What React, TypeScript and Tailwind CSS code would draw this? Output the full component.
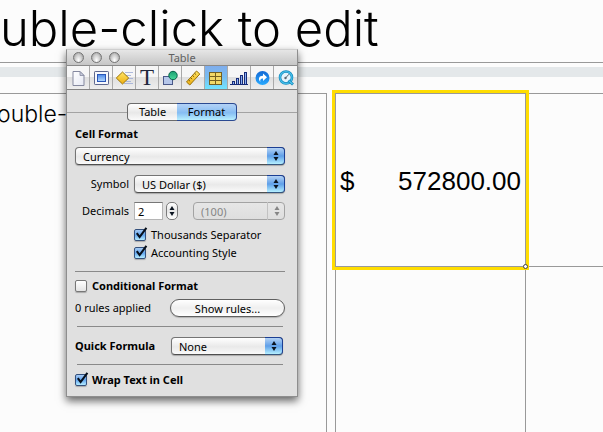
import React, { useState } from "react";

const uiFont = "font-['Noto_Sans','Open_Sans',sans-serif]";

function Arrows({ dim }: { dim?: boolean }) {
  return (
    <svg width="8" height="12" viewBox="0 0 8 12" aria-hidden="true" fill={dim ? "#858585" : "#0b1420"}>
      <path d="M4 1 L6.5 5 H1.5 Z" />
      <path d="M4 11 L6.5 7 H1.5 Z" />
    </svg>
  );
}

function Popup({ id, label, options, disabled, className }: {
  id: string;
  label: string;
  options: string[];
  disabled?: boolean;
  className: string;
}) {
  return (
    <div className={`relative h-[18px] ${className}`}>
      <select
        id={id}
        aria-label={label}
        disabled={disabled}
        className={
          disabled
            ? "block h-full w-full appearance-none rounded-[4px] border border-[#a3a3a3] bg-linear-to-b from-[#e6e6e6] to-[#dedede] px-[7px] text-[11px] leading-[15px] text-[#858585] opacity-100"
            : "block h-full w-full appearance-none rounded-[4px] border border-[#747474] border-b-[#4f4f4f] bg-linear-to-b from-white via-[#e9e9e9] via-55% to-[#fafafa] px-[7px] text-[11px] leading-[15px] text-black shadow-[0_1px_1px_rgba(0,0,0,0.25)]"
        }
      >
        {options.map((o) => (
          <option key={o}>{o}</option>
        ))}
      </select>
      <span
        className={
          disabled
            ? "pointer-events-none absolute inset-y-0 right-0 flex w-[18px] items-center justify-center border-l border-[#c2c2c2]"
            : "pointer-events-none absolute inset-y-0 right-0 flex w-[18px] items-center justify-center rounded-r-[4px] border border-l-0 border-[#1c3f93] border-b-[#35557e] bg-linear-to-b from-[#b4d2f4] via-[#5f9fe8] via-50% to-[#b5f0ff]"
        }
      >
        <Arrows dim={disabled} />
      </span>
    </div>
  );
}

function Check({ label, initial, bold }: { label: string; initial?: boolean; bold?: boolean }) {
  const [on, setOn] = useState(!!initial);
  return (
    <label className={`flex h-[18px] items-center gap-[5px] ${bold ? "font-bold" : ""}`}>
      <span className="relative block h-[12px] w-[12px]">
        <input
          type="checkbox"
          checked={on}
          onChange={() => setOn(!on)}
          className="block h-[12px] w-[12px] appearance-none rounded-[2px] border border-[#777] bg-linear-to-b from-white to-[#e4e4e4] shadow-[0_1px_1px_rgba(0,0,0,0.25)] checked:border-[#34507c] checked:from-[#a6cbf5] checked:via-[#62a5ee] checked:to-[#b4ecff]"
        />
        {on && (
          <svg className="pointer-events-none absolute -top-[2px] left-0" width="14" height="14" viewBox="0 0 14 14" aria-hidden="true">
            <path d="M2.8 6.2 L5.6 10 L12.4 .8" fill="none" stroke="#07101c" strokeWidth="2.1" />
          </svg>
        )}
      </span>
      {label}
    </label>
  );
}

function Icon({ children }: { children: React.ReactNode }) {
  return (
    <svg width="22" height="23" viewBox="0 0 22 23" aria-hidden="true">
      {children}
    </svg>
  );
}

const tools: { name: string; icon: React.ReactNode }[] = [
  {
    name: "Document",
    icon: (
      <Icon>
        <path d="M6 5.5 H13 L17 9.5 V19.5 H6 Z" fill="url(#paper)" stroke="#85899f" />
        <path d="M13 5.5 V9.5 H17 Z" fill="#c9cddd" stroke="#85899f" strokeWidth=".8" />
      </Icon>
    ),
  },
  {
    name: "Slide",
    icon: (
      <Icon>
        <rect x="4.5" y="5.5" width="14" height="13" rx=".7" fill="#f7f8fc" stroke="#5d678e" />
        <rect x="7.5" y="8.5" width="8" height="7" fill="url(#blue)" stroke="#2a56b8" />
      </Icon>
    ),
  },
  {
    name: "Build",
    icon: (
      <Icon>
        <path d="M12 6.5 H20 M13 9.5 H18 M14 12.5 H20 M13 15.5 H18 M11 17.5 H20" stroke="#9cabd5" strokeWidth=".8" />
        <path d="M9.5 6 L15.7 12 L9.5 18 L3.3 12 Z" fill="url(#gold)" stroke="#9b7406" />
      </Icon>
    ),
  },
  {
    name: "Text",
    icon: (
      <span className="flex h-[23px] items-center justify-center font-['Liberation_Serif',serif] text-[23px] leading-[23px] text-[#20263b]">T</span>
    ),
  },
  {
    name: "Graphic",
    icon: (
      <Icon>
        <rect x="4.5" y="10.5" width="9" height="8" fill="#b6c7ea" stroke="#4a5888" />
        <circle cx="14" cy="9.5" r="4.2" fill="url(#green)" stroke="#086249" />
      </Icon>
    ),
  },
  {
    name: "Metrics",
    icon: (
      <Icon>
        <path d="M4.5 16 L14.5 5 L17.8 8 L7.8 19 Z" fill="url(#gold)" stroke="#997106" />
        <path d="M6.5 13.8 l1.6 1.5 M8.5 11.6 l1.6 1.5 M10.5 9.4 l1.6 1.5 M12.5 7.2 l1.6 1.5" stroke="#715407" strokeWidth=".9" />
      </Icon>
    ),
  },
  {
    name: "Table",
    icon: (
      <Icon>
        <rect x="4.5" y="6.5" width="12" height="12" fill="#f2d967" stroke="#756120" />
        <path d="M4.5 10.5 H16.5 M4.5 14.5 H16.5 M10.5 6.5 V18.5" stroke="#756120" />
      </Icon>
    ),
  },
  {
    name: "Chart",
    icon: (
      <Icon>
        <g fill="#88aff4" stroke="#172b77">
          <rect x="4.5" y="15.5" width="2" height="3" />
          <rect x="8.5" y="12.5" width="2" height="6" />
          <rect x="12.5" y="9.5" width="2" height="9" />
          <rect x="16.5" y="6.5" width="2" height="12" />
        </g>
        <path d="M2 18.5 H20" stroke="#172b77" />
      </Icon>
    ),
  },
  {
    name: "Hyperlink",
    icon: (
      <Icon>
        <circle cx="11.5" cy="12" r="7" fill="url(#link)" />
        <path d="M9.3 16 C6.8 12.8 8 9.8 12 9.8 V7.4 L16 11.2 L12 15 V12.5 C9.8 12.4 8.8 13.6 9.3 16 Z" fill="#fff" />
      </Icon>
    ),
  },
  {
    name: "QuickTime",
    icon: (
      <Icon>
        <circle cx="11" cy="11.5" r="6" fill="#e4f4fd" stroke="#1488bd" strokeWidth="2.6" />
        <circle cx="11" cy="11.5" r="6" fill="none" stroke="#46c0ea" strokeWidth="1.2" />
        <circle cx="10.5" cy="12" r="1.2" fill="#5a6670" />
        <path d="M10.5 12 L14 8.2" stroke="#5a6670" />
        <path d="M13.5 14.5 L18 18.5" stroke="#1488bd" strokeWidth="2.8" />
        <path d="M14 14.9 L17.5 18" stroke="#55cdf2" strokeWidth="1.2" />
      </Icon>
    ),
  },
];

function Gradients() {
  return (
    <svg width="0" height="0" className="absolute" aria-hidden="true">
      <defs>
        <linearGradient id="paper" x1="0" y1="0" x2="1" y2="1">
          <stop offset="0" stopColor="#fff" />
          <stop offset="1" stopColor="#e6e9f3" />
        </linearGradient>
        <linearGradient id="blue" x1="0" y1="0" x2="0" y2="1">
          <stop offset="0" stopColor="#4a86e6" />
          <stop offset="1" stopColor="#b7dcff" />
        </linearGradient>
        <linearGradient id="gold" x1="0" y1="0" x2="0" y2="1">
          <stop offset="0" stopColor="#ffe566" />
          <stop offset="1" stopColor="#eeae10" />
        </linearGradient>
        <linearGradient id="green" x1="0" y1="0" x2="0" y2="1">
          <stop offset="0" stopColor="#1a9f70" />
          <stop offset="1" stopColor="#48d99a" />
        </linearGradient>
        <linearGradient id="link" x1="0" y1="0" x2="0" y2="1">
          <stop offset="0" stopColor="#1368d4" />
          <stop offset="1" stopColor="#28aaff" />
        </linearGradient>
      </defs>
    </svg>
  );
}

function Inspector() {
  const [tab, setTab] = useState("Format");
  return (
    <section
      aria-label="Table inspector"
      className={`absolute left-[66px] top-[49px] w-[232px] border border-[#8e8e8e] border-t-[#cfcfcf] bg-[#e0e0e0] pb-[7px] text-[11px] leading-[18px] text-black shadow-[0_4px_8px_rgba(0,0,0,0.6)] ${uiFont}`}
    >
      <header className="grid h-[16px] grid-cols-[1fr_auto_1fr] items-center border-b border-[#8a8a8a] bg-linear-to-b from-[#e6e6e6] to-[#c6c6c6] px-[6px]">
        <div className="flex gap-[7px]">
          {["Close", "Minimize", "Zoom"].map((n) => (
            <button
              key={n}
              aria-label={n}
              className="h-[11px] w-[11px] rounded-full border border-[#757575] bg-radial-[at_50%_80%] from-white via-[#cfcfcf] to-[#8f8f8f]"
            />
          ))}
        </div>
        <h2 className="text-[11px] leading-[15px] text-[#606060]">Table</h2>
      </header>

      <nav className="grid h-[24px] grid-cols-10 border-b border-[#828282]">
        {tools.map((t) => (
          <button
            key={t.name}
            aria-label={t.name}
            className={
              t.name === "Table"
                ? "flex items-center justify-center border-r border-[#a9a9a9] bg-linear-to-b from-[#7fadec] via-[#78bdf0] to-[#6fe4ff]"
                : "flex items-center justify-center border-r border-[#a9a9a9] bg-linear-to-b from-[#f6f6f6] from-50% via-[#dfdfdf] via-50% to-[#eeeeee] last:border-r-0"
            }
          >
            {t.icon}
          </button>
        ))}
      </nav>

      <div className="mt-[13px] flex items-center">
        <span className="h-px flex-1 bg-[#a3a3a3]" />
        <div className="grid h-[18px] w-[110px] grid-cols-[50px_1fr] text-[11px] leading-[16px]">
          {["Table", "Format"].map((t) => (
            <button
              key={t}
              onClick={() => setTab(t)}
              className={`border first:rounded-l-[4px] first:border-r-0 last:rounded-r-[4px] last:border-l-0 ${
                tab === t
                  ? "border-[#2b4a91] bg-linear-to-b from-[#b3d2f6] via-[#86bdf3] via-55% to-[#b8f0ff]"
                  : "border-[#6b6b6b] bg-linear-to-b from-white via-[#e8e8e8] via-55% to-[#fafafa]"
              }`}
            >
              {t}
            </button>
          ))}
        </div>
        <span className="h-px flex-1 bg-[#a3a3a3]" />
      </div>

      <form className="flex flex-col pl-2 pr-3" onSubmit={(e) => e.preventDefault()}>
        <h3 className="mt-[4px] font-bold">Cell Format</h3>
        <Popup id="cell-format" label="Cell Format" options={["Currency", "Number", "Percentage"]} className="mt-1 w-full" />

        <div className="mt-[10px] grid grid-cols-[54px_1fr] items-center gap-x-[5px] gap-y-[9px]">
          <label htmlFor="symbol" className="text-right">Symbol</label>
          <Popup id="symbol" label="Symbol" options={["US Dollar ($)", "Euro (€)"]} className="w-full" />
          <label htmlFor="decimals" className="text-right">Decimals</label>
          <div className="flex items-center">
            <input
              id="decimals"
              defaultValue="2"
              className="h-[18px] w-[29px] border border-[#b5b5b5] border-t-[#777] bg-white px-[3px] text-[11px] leading-[16px]"
            />
            <button
              aria-label="Step decimals"
              className="ml-[3px] flex h-[18px] w-[12px] items-center justify-center rounded-[5px] border border-[#7b7b7b] bg-linear-to-b from-white via-[#e6e6e6] to-white"
            >
              <Arrows />
            </button>
            <Popup id="negative" label="Negative number style" options={["(100)"]} disabled className="ml-auto w-[92px]" />
          </div>
        </div>

        <div className="mt-[6px] flex flex-col pl-[59px]">
          <Check label="Thousands Separator" initial />
          <Check label="Accounting Style" initial />
        </div>

        <hr className="mt-[9px] border-[#8a8a8a]" />

        <div className="mt-[5px]">
          <Check label="Conditional Format" bold />
        </div>
        <div className="mt-[4px] flex items-center justify-between">
          <span>0 rules applied</span>
          <button className="h-[18px] w-[115px] rounded-full border border-[#5f5f5f] bg-linear-to-b from-white via-[#efefef] to-white text-[11px] leading-[15px] shadow-[0_1px_1px_rgba(0,0,0,0.2)]">
            Show rules...
          </button>
        </div>

        <hr className="mx-[2px] mt-[9px] border-[#8a8a8a]" />

        <div className="mt-[10px] flex items-center justify-between pr-[2px]">
          <label htmlFor="quick-formula" className="font-bold">Quick Formula</label>
          <Popup id="quick-formula" label="Quick Formula" options={["None", "Sum", "Average"]} className="w-[112px]" />
        </div>

        <hr className="mx-[2px] mt-[9px] border-[#8a8a8a]" />

        <div className="mt-[6px]">
          <Check label="Wrap Text in Cell" initial bold />
        </div>
      </form>
    </section>
  );
}

export default function App() {
  return (
    <main className="relative flex min-h-screen flex-col overflow-hidden bg-[#fcfcfc] font-['Inter','Liberation_Sans',sans-serif] text-black">
      <Gradients />
      <div className="h-[63px] border-b border-[#999]">
        <h1 className="whitespace-nowrap text-[49px] font-light leading-[58px]">uble-click to edit</h1>
      </div>
      <div className="mt-[4px] h-[10px] bg-[#e4e8ea]" />
      <div className="mt-[16px] flex flex-1">
        <div className="w-[327px] shrink-0 border-r border-t border-[#999] pt-[3px]">
          <p className="-ml-[3px] text-[23px] font-light leading-[34px]">ouble-</p>
        </div>
        <table className="relative ml-[8px] flex-1 border-collapse font-['Liberation_Sans',sans-serif]">
          <colgroup>
            <col className="w-[190px]" />
            <col />
          </colgroup>
          <tbody>
            <tr className="h-[173px]">
              <td className="relative border border-[#999] p-0">
                <div className="flex justify-between px-[4px] pt-[2px] text-[26px] leading-[30px]">
                  <span>$</span>
                  <span>572800.00</span>
                </div>
                <span className="pointer-events-none absolute -inset-[4px] border-[3px] border-[#ffdd00]" />
                <span className="absolute -bottom-[3px] -right-[3px] h-[5px] w-[5px] rounded-full border border-[#444] bg-white" />
              </td>
              <td className="border-y border-[#999]" />
            </tr>
            <tr>
              <td className="border-x border-[#999]" />
              <td />
            </tr>
          </tbody>
        </table>
      </div>
      <Inspector />
    </main>
  );
}
